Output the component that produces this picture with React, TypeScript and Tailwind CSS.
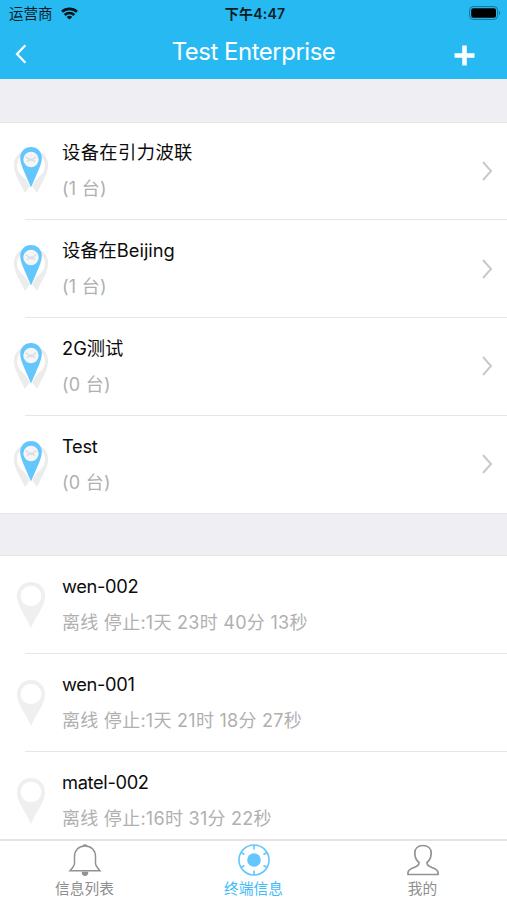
interface Group {
  name: string;
  count: number;
  spacing?: string;
}

interface Device {
  name: string;
  status: string;
}

const groups: Group[] = [
  { name: "设备在引力波联", count: 1, spacing: "tracking-[0.4px]" },
  { name: "设备在Beijing", count: 1 },
  { name: "2G测试", count: 0 },
  { name: "Test", count: 0, spacing: "tracking-[-0.3px]" },
];

const devices: Device[] = [
  { name: "wen-002", status: "离线 停止:1天 23时 40分 13秒" },
  { name: "wen-001", status: "离线 停止:1天 21时 18分 27秒" },
  { name: "matel-002", status: "离线 停止:16时 31分 22秒" },
];

function StatusBar() {
  return (
    <div className="grid h-[26px] grid-cols-3 items-center pl-[9px] pr-[6px] pt-[2px] text-[14px] leading-5 text-[#0b1c24]">
      <div className="flex items-center gap-[8px]">
        <span className="text-[14.5px]">运营商</span>
        <svg className="-mt-[2px]" width="17" height="13" viewBox="0 0 17 13" fill="none" stroke="#08151b" strokeWidth="2.6">
          <path d="M1 4.8C5.2 .9 11.8 .9 16 4.8" />
          <path d="M3.7 8C6.4 5.4 10.6 5.4 13.3 8" />
          <path d="M8.5 12.6L5.7 9.9C7.3 8.5 9.7 8.5 11.3 9.9Z" fill="#08151b" stroke="none" />
        </svg>
      </div>
      <span className="text-center font-semibold tracking-[0.25px] whitespace-nowrap">下午4:47</span>
      <svg className="-mt-[2px] justify-self-end" width="32" height="14" viewBox="0 0 32 14">
        <rect x=".6" y=".6" width="28" height="12.8" rx="3.5" fill="none" stroke="#157397" strokeWidth="1" />
        <rect x="2.2" y="2.3" width="24.8" height="9.4" rx="2" fill="#000" />
        <path d="M30 5v4c1.6-.6 1.6-3.4 0-4Z" fill="#157397" />
      </svg>
    </div>
  );
}

function Header() {
  return (
    <header className="h-[79px] shrink-0 bg-[#27b9f1]">
      <StatusBar />
      <div className="grid h-[53px] grid-cols-[80px_1fr_80px] items-center text-white">
        <svg className="ml-[15px] mt-[3px]" width="12" height="20" viewBox="0 0 12 20" fill="none" stroke="currentColor" strokeWidth="2.2">
          <path d="M10.4 1.3L2 10l8.4 8.7" />
        </svg>
        <h1 className="pb-[1px] text-center text-[24px] leading-8 tracking-[-0.5px]">Test Enterprise</h1>
        <svg className="ml-[27px] mt-[5px]" width="21" height="21" viewBox="0 0 21 21" stroke="currentColor" strokeWidth="4.6">
          <path d="M10.5 .5v20M.5 10.5h20" />
        </svg>
      </div>
    </header>
  );
}

function GroupPin() {
  return (
    <svg width="36" height="50" viewBox="0 0 36 50">
      {/* grey pins behind */}
      <path d="M8 6.500C3 9 .5 14.500 1 20.500C1.500 29 8 38 12 47L17 40L18 8Z" fill="#ececed" />
      <path d="M28 6.500C33 9 35.500 14.500 35 20.500C34.500 29 28 38 24 47L19 40L18 8Z" fill="#ececed" />
      <path d="M7.500 11C3.500 14 3 22 6 26.500C8 29 10.500 31 13 34L18 42L23 34C25.500 31 28 29 30 26.500C33 22 32.500 14 28.500 11Z" fill="#fff" />
      <path d="M18 1C11.800 1 7.200 5.600 7.200 11.800C7.200 15.500 8.500 19 10 23L18 41.500L26 23C27.500 19 28.800 15.500 28.800 11.800C28.800 5.600 24.200 1 18 1Z" fill="#63c6fc" />
      <circle cx="18" cy="13.500" r="7.700" fill="#f4f5f6" />
      <path d="M12.500 10.500L18 14.500L23.500 10.500M14 15.500L18 13L22 15.500" fill="none" stroke="#dcdfe2" strokeWidth="1.500" />
    </svg>
  );
}

function DevicePin() {
  return (
    <svg width="30" height="48" viewBox="0 0 30 48">
      <path
        d="M15 1C7 1 1 7 1 15C1 25 8 31.500 15 47C22 31.500 29 25 29 15C29 7 23 1 15 1ZM15 4.800A10.500 10.200 0 0 1 15 25.200A10.500 10.200 0 0 1 15 4.800Z"
        fill="#efefef"
        fillRule="evenodd"
      />
    </svg>
  );
}

interface RowProps {
  title: string;
  detail: string;
  icon: React.ReactNode;
  spacing?: string;
  arrow?: boolean;
  last?: boolean;
}

function Row({ title, detail, icon, spacing = "", arrow = false, last = false }: RowProps) {
  return (
    <li className="flex h-[97.7px] shrink-0">
      <div className="flex w-[25px] shrink-0 items-center">
        <div className="ml-[13px] flex w-9 shrink-0 justify-center">{icon}</div>
      </div>
      <div className={`flex min-w-0 flex-1 items-center border-b pl-[37px] pr-[14px] ${last ? "border-transparent" : "border-[#e6e6e8]"}`}>
        <div className="flex-1 whitespace-nowrap">
          <p className={`text-[18.3px] leading-9 text-[#0c0c0c] ${spacing}`}>{title}</p>
          <p className="mt-[1px] text-[18px] leading-9 tracking-[0.27px] text-[#b0b0b0]">{detail}</p>
        </div>
        {arrow && (
          <svg width="12" height="22" viewBox="0 0 12 22" fill="none" stroke="#c9c9cc" strokeWidth="2">
            <path d="M2 2l8 9-8 9" />
          </svg>
        )}
      </div>
    </li>
  );
}

function BellIcon() {
  return (
    <svg width="34" height="34" viewBox="0 0 34 34" fill="none" stroke="#929292" strokeWidth="1.500">
      <path d="M15 3.500C15 1.500 19 1.500 19 3.500M17 3C10.500 3 6.500 7.500 6.500 13.500V20C6.500 23 4.500 25 2 27.700H32C29.500 25 27.500 23 27.500 20V13.500C27.500 7.500 23.500 3 17 3Z" />
      <path d="M14.500 29.500C14.500 33 19.500 33 19.500 29.500Z" fill="#929292" />
    </svg>
  );
}

function RadarIcon() {
  return (
    <svg width="34" height="34" viewBox="0 0 34 34" fill="none" stroke="#63c6fc" strokeWidth="1.600">
      <circle cx="17" cy="17" r="15" />
      <circle cx="17" cy="17" r="6.800" fill="#63c6fc" stroke="none" />
      <path d="M17 2v4.500M17 27.500V32M4 9.500l3.500 2M30 9.500l-3.500 2M4 24.500l3.500-2M30 24.500l-3.500-2" />
    </svg>
  );
}

function UserIcon() {
  return (
    <svg width="34" height="34" viewBox="0 0 34 34" fill="none" stroke="#929292" strokeWidth="1.700">
      <path d="M17 2.500C12 2.500 8.800 5.500 8.800 10C8.800 14 10.500 17.500 13 19.500C13.500 22 11.500 23 8 24.500C4 26 2 27 2 29.500V31.500H32V29.500C32 27 30 26 26 24.500C22.500 23 20.500 22 21 19.500C23.500 17.500 25.200 14 25.200 10C25.200 5.500 22 2.500 17 2.500Z" />
    </svg>
  );
}

const tabs = [
  { label: "信息列表", icon: <BellIcon />, active: false },
  { label: "终端信息", icon: <RadarIcon />, active: true },
  { label: "我的", icon: <UserIcon />, active: false },
];

export default function App() {
  return (
    <div className="flex h-[900px] w-full flex-col overflow-hidden bg-[#eeeef3] font-['Inter','Noto_Sans_CJK_SC',sans-serif]">
      <Header />

      <main className="min-h-0 flex-1 overflow-hidden pt-[43.6px]">
        <ul className="bg-white shadow-[0_0_0_1px_#e6e6e9]">
          {groups.map((group, idx) => (
            <Row
              key={group.name}
              title={group.name}
              detail={`(${group.count} 台)`}
              spacing={group.spacing}
              icon={<GroupPin />}
              arrow
              last={idx === groups.length - 1}
            />
          ))}
        </ul>
        <ul className="mt-[43px] bg-white shadow-[0_0_0_1px_#e6e6e9]">
          {devices.map((device) => (
            <Row key={device.name} title={device.name} detail={device.status} spacing="tracking-[-0.35px]" icon={<DevicePin />} />
          ))}
        </ul>
      </main>

      {/* Tab bar */}
      <nav className="grid h-[61px] shrink-0 grid-cols-3 border-t-2 border-[#e4e4e4] bg-white">
        {tabs.map((tab) => (
          <div key={tab.label} className={`flex flex-col items-center pt-[2px] ${tab.active ? "text-[#3fbbf7]" : "text-[#8e8e8e]"}`}>
            {tab.icon}
            <span className="mt-[2px] text-[14.7px] leading-5">{tab.label}</span>
          </div>
        ))}
      </nav>
    </div>
  );
}
